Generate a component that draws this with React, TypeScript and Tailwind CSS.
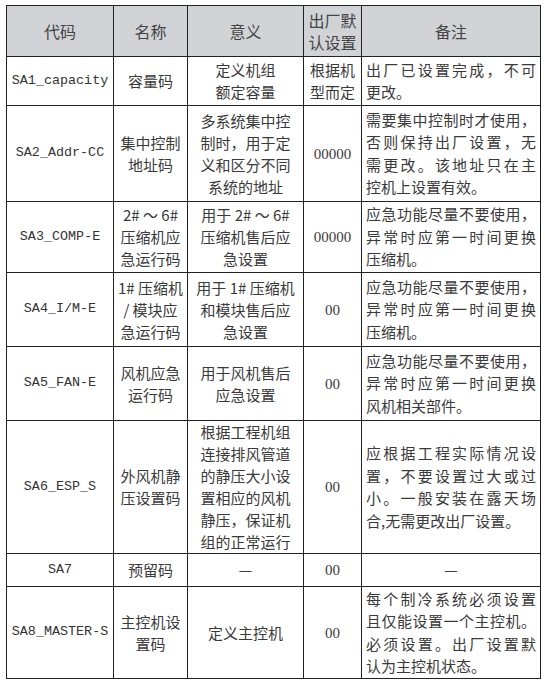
type Row = {
  code: string;
  name: string[];
  meaning: string[];
  def: string[];
  note: string[];
  noteCenter?: boolean;
  h: string;
};

const rows: Row[] = [
  {
    code: "SA1_capacity",
    name: ["容量码"],
    meaning: ["定义机组", "额定容量"],
    def: ["根据机", "型而定"],
    note: ["出厂已设置完成，不可", "更改。"],
    h: "h-[49px]",
  },
  {
    code: "SA2_Addr-CC",
    name: ["集中控制", "地址码"],
    meaning: ["多系统集中控", "制时，用于定", "义和区分不同", "系统的地址"],
    def: ["00000"],
    note: ["需要集中控制时才使用，", "否则保持出厂设置，无", "需更改。该地址只在主", "控机上设置有效。"],
    h: "h-[96px]",
  },
  {
    code: "SA3_COMP-E",
    name: ["2# ～ 6#", "压缩机应", "急运行码"],
    meaning: ["用于 2# ～ 6#", "压缩机售后应", "急设置"],
    def: ["00000"],
    note: ["应急功能尽量不要使用，", "异常时应第一时间更换", "压缩机。"],
    h: "h-[71px]",
  },
  {
    code: "SA4_I/M-E",
    name: ["1# 压缩机", "/ 模块应", "急运行码"],
    meaning: ["用于 1# 压缩机", "和模块售后应", "急设置"],
    def: ["00"],
    note: ["应急功能尽量不要使用，", "异常时应第一时间更换", "压缩机。"],
    h: "h-[74px]",
  },
  {
    code: "SA5_FAN-E",
    name: ["风机应急", "运行码"],
    meaning: ["用于风机售后", "应急设置"],
    def: ["00"],
    note: ["应急功能尽量不要使用，", "异常时应第一时间更换", "风机相关部件。"],
    h: "h-[74px]",
  },
  {
    code: "SA6_ESP_S",
    name: ["外风机静", "压设置码"],
    meaning: ["根据工程机组", "连接排风管道", "的静压大小设", "置相应的风机", "静压，保证机", "组的正常运行"],
    def: ["00"],
    note: ["应根据工程实际情况设", "置，不要设置过大或过", "小。一般安装在露天场", "合,无需更改出厂设置。"],
    h: "h-[131px]",
  },
  {
    code: "SA7",
    name: ["预留码"],
    meaning: ["—"],
    def: ["00"],
    note: ["—"],
    noteCenter: true,
    h: "h-[33px]",
  },
  {
    code: "SA8_MASTER-S",
    name: ["主控机设", "置码"],
    meaning: ["定义主控机"],
    def: ["00"],
    note: ["每个制冷系统必须设置", "且仅能设置一个主控机。", "必须设置。出厂设置默", "认为主控机状态。"],
    h: "h-[92px]",
  },
];

const cjk = "font-['Noto_Sans_CJK_SC',sans-serif]";
const cell = "border border-[#222] p-0 align-middle";

const Lines = ({ lines }: { lines: string[] }) => (
  <div className="flex flex-col items-center leading-[22px]">
    {lines.map((l, i) => (
      <span key={i} className="whitespace-pre">
        {l}
      </span>
    ))}
  </div>
);

const Note = ({ lines, center }: { lines: string[]; center?: boolean }) => {
  if (center) return <div className="text-center leading-[22px]">{lines[0]}</div>;
  return (
    <div className="px-[4px] leading-[22.5px]">
      {lines.map((l, i) => (
        <div
          key={i}
          className={
            i < lines.length - 1 ? "text-justify [text-align-last:justify]" : "text-left"
          }
        >
          {l}
        </div>
      ))}
    </div>
  );
};

export default function App() {
  return (
    <div className={`w-[545px] h-[682px] bg-white pt-[5px] pl-[6px] text-[#3a3a3a] text-[15px] ${cjk}`}>
      <table className="border-collapse table-fixed w-[534px] border-[1.5px] border-[#222]">
        <colgroup>
          <col className="w-[107px]" />
          <col className="w-[74px]" />
          <col className="w-[116px]" />
          <col className="w-[58px]" />
          <col className="w-[179px]" />
        </colgroup>
        <thead>
          <tr className="h-[51px] bg-[#d1d3d6] text-[#444] text-[16px]">
            <th className={`${cell} font-normal`}>代码</th>
            <th className={`${cell} font-normal`}>名称</th>
            <th className={`${cell} font-normal`}>意义</th>
            <th className={`${cell} font-normal leading-[22px]`}>
              出厂默
              <br />
              认设置
            </th>
            <th className={`${cell} font-normal`}>备注</th>
          </tr>
        </thead>
        <tbody>
          {rows.map((r) => (
            <tr key={r.code} className={r.h}>
              <td className={`${cell} text-center font-['Liberation_Mono',monospace] text-[13.4px] text-[#333]`}>
                {r.code}
              </td>
              <td className={cell}>
                <Lines lines={r.name} />
              </td>
              <td className={cell}>
                <Lines lines={r.meaning} />
              </td>
              <td className={`${cell} text-center`}>
                {r.def.length > 1 ? (
                  <Lines lines={r.def} />
                ) : (
                  <span className="font-['Liberation_Serif',serif] text-[15px]">{r.def[0]}</span>
                )}
              </td>
              <td className={cell}>
                <Note lines={r.note} center={r.noteCenter} />
              </td>
            </tr>
          ))}
        </tbody>
      </table>
    </div>
  );
}
